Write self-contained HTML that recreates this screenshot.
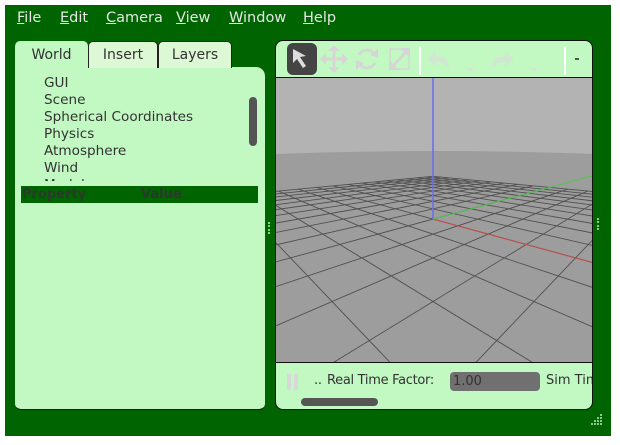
<!DOCTYPE html>
<html><head><meta charset="utf-8"><style>
*{margin:0;padding:0;box-sizing:border-box}
html,body{overflow:hidden}
body{width:620px;height:445px;background:#fff;position:relative;font-family:"DejaVu Sans",sans-serif;}
#win{position:absolute;left:5px;top:5px;width:606px;height:431px;background:#006400}
.m u{text-decoration:underline}
.a{position:absolute}
.tab{position:absolute;top:41px;height:27px;border:1px solid #222;border-bottom:none;border-radius:5px 5px 0 0;background:#dcf8d4;font-size:14px;color:#333;text-align:center;line-height:26px}
.tr{position:absolute;left:44px;font-size:13.6px;color:#333;white-space:nowrap}
.m{position:absolute;top:10px;color:#e6e6e6;font-size:14.5px;font-family:"DejaVu Sans",sans-serif}
</style></head><body>
<div id="win"></div>
<div class="m" style="left:17px"><u>F</u>ile</div>
<div class="m" style="left:60px"><u>E</u>dit</div>
<div class="m" style="left:106px"><u>C</u>amera</div>
<div class="m" style="left:176px"><u>V</u>iew</div>
<div class="m" style="left:229px"><u>W</u>indow</div>
<div class="m" style="left:303px"><u>H</u>elp</div>

<div class="a" style="left:15px;top:67px;width:250px;height:343px;background:#c2f8c2;border-radius:0 9px 6px 6px;border-bottom:1px solid #111"></div>
<div class="tab" style="left:15px;width:73px;background:#c2f8c2;height:28px;border-color:#c2f8c2;">World</div>
<div class="tab" style="left:88px;width:70px">Insert</div>
<div class="tab" style="left:158px;width:74px">Layers</div>
<div class="tr" style="top:75px">GUI</div>
<div class="tr" style="top:92px">Scene</div>
<div class="tr" style="top:109px">Spherical Coordinates</div>
<div class="tr" style="top:126px">Physics</div>
<div class="tr" style="top:143px">Atmosphere</div>
<div class="tr" style="top:160px">Wind</div>
<div class="a" style="left:44px;top:177px;width:60px;height:4px;overflow:hidden"><div class="tr" style="left:0;top:0">Models</div></div>
<div class="a" style="left:249px;top:97px;width:8px;height:49px;background:#555;border-radius:4px"></div>
<div class="a" style="left:21px;top:186px;width:237px;height:17px;background:#006400;color:#2a3a2a;font-weight:bold;font-size:13px;line-height:17px">
<span style="position:absolute;left:1px">Property</span><span style="position:absolute;left:120px">Value</span></div>
<div class="a" style="left:268px;top:222px;width:2px;height:12px;border-left:2px dotted #8c8"></div>
<div class="a" style="left:597px;top:218px;width:2px;height:12px;border-left:2px dotted #8c8"></div>

<div class="a" style="left:275px;top:40px;width:318px;height:370px;background:#c2f8c2;border-radius:8px;border:1px solid #111;overflow:hidden">
 <svg class="a" style="left:0;top:0" width="318" height="40">
  <rect x="11" y="2" width="30" height="32" rx="6" fill="#444"/>
  <path d="M17 8 L17 22 L21 18 L27 27 L30 25 L24 16 L30 15 Z" fill="#ddd"/>
  <g stroke="#d6d6d6" stroke-width="3" fill="#d6d6d6">
   <path d="M48 18 H68 M58 8 V28" fill="none"/>
   <path d="M44 18 L50 12 L50 24Z M72 18 L66 12 L66 24Z M58 4 L52 10 L64 10Z M58 32 L52 26 L64 26Z" stroke="none"/>
   <path d="M83 14 A9 9 0 0 1 99 14 M99 22 A9 9 0 0 1 83 22" fill="none"/>
   <path d="M102 7 L102 17 L94 14Z M80 29 L80 19 L88 22Z" stroke="none"/>
   <rect x="114" y="8" width="19" height="20" fill="none" stroke-width="1.5"/>
   <path d="M116 26 L131 10" fill="none"/>
   <path d="M134 7 L124 7 L134 17Z M113 29 L113 19 L123 29Z" stroke="none"/>
  </g>
  <rect x="143" y="6" width="2" height="28" fill="#fff"/>
  <path d="M151 18 L160 10 L160 15 Q173 15 173 27 Q168 21 160 21 L160 26Z" fill="#d0e8d0"/>
  <path d="M191 27 l4 4 l4 -4z" fill="#d0e8d0"/>
  <path d="M238 18 L229 10 L229 15 Q216 15 216 27 Q221 21 229 21 L229 26Z" fill="#d0e8d0"/>
  <path d="M254 27 l4 4 l4 -4z" fill="#d0e8d0"/>
  <rect x="288" y="6" width="2" height="28" fill="#fff"/>
  <rect x="299" y="17" width="4" height="2" fill="#555"/>
 </svg>
 <svg id="vp" class="a" style="left:0;top:36px;border-top:1px solid #111;border-bottom:1px solid #111" width="318" height="286"></svg>
 <div class="a" style="left:11px;top:333px;width:4px;height:16px;background:#d8d8d8"></div>
 <div class="a" style="left:18px;top:333px;width:4px;height:16px;background:#d8d8d8"></div>
 <div class="a" style="left:38px;top:332px;font-size:13px;letter-spacing:-0.3px;color:#333;white-space:nowrap">..</div>
 <div class="a" style="left:51px;top:332px;font-size:13px;letter-spacing:-0.3px;color:#333;white-space:nowrap">Real Time Factor:</div>
 <div class="a" style="left:174px;top:331px;width:90px;height:19px;background:#707070;border-radius:4px;font-size:13px;color:#333;padding-left:3px;line-height:19px">1.00</div>
 <div class="a" style="left:270px;top:332px;font-size:13px;color:#333;white-space:nowrap">Sim Time</div>
 <div class="a" style="left:25px;top:357px;width:77px;height:8px;background:#555;border-radius:4px"></div>
</div>
<svg class="a" style="left:590px;top:413px" width="14" height="14"><g fill="#8c8"><rect x="10" y="1" width="2" height="2"/><rect x="7" y="4" width="2" height="2"/><rect x="10" y="4" width="2" height="2"/><rect x="4" y="7" width="2" height="2"/><rect x="7" y="7" width="2" height="2"/><rect x="10" y="7" width="2" height="2"/><rect x="1" y="10" width="2" height="2"/><rect x="4" y="10" width="2" height="2"/><rect x="7" y="10" width="2" height="2"/><rect x="10" y="10" width="2" height="2"/></g></svg>
<script>
(function(){
var svg=document.getElementById('vp');var cx=157,cy=141,f=233;
var E=[5,-5,2],F=[-0.680,0.680,-0.272],R=[0.7071,0.7071,0],U=[-0.192,0.192,0.962];
function cam(p){var d=[p[0]-E[0],p[1]-E[1],p[2]-E[2]];return [d[0]*R[0]+d[1]*R[1]+d[2]*R[2],d[0]*U[0]+d[1]*U[1]+d[2]*U[2],d[0]*F[0]+d[1]*F[1]+d[2]*F[2]];}
function pr(c){return [cx+f*c[0]/c[2],cy-f*c[1]/c[2]];}
var s='<rect width="318" height="286" fill="#b3b3b3"/><path d="M0 76 Q159 70 318 76 V286 H0Z" fill="#9d9d9d"/>';
function line(a,b,col,w){var A=cam(a),B=cam(b),n=0.2;if(A[2]<n&&B[2]<n)return;
 if(A[2]<n){var t=(n-A[2])/(B[2]-A[2]);A=[A[0]+t*(B[0]-A[0]),A[1]+t*(B[1]-A[1]),n];}
 if(B[2]<n){var t=(n-B[2])/(A[2]-B[2]);B=[B[0]+t*(A[0]-B[0]),B[1]+t*(A[1]-B[1]),n];}
 var p=pr(A),q=pr(B);s+='<line x1="'+p[0].toFixed(1)+'" y1="'+p[1].toFixed(1)+'" x2="'+q[0].toFixed(1)+'" y2="'+q[1].toFixed(1)+'" stroke="'+col+'" stroke-width="'+w+'"/>';}
for(var i=-10;i<=10;i++){line([i,-10,0],[i,10,0],'#505050',0.9);line([-10,i,0],[10,i,0],'#505050',0.9);}
line([0,0,0],[30,0,0],'#c84a4a',1);line([0,0,0],[0,30,0],'#4ac84a',1);line([0,0,0],[0,0,30],'#6a6af0',1.5);
svg.innerHTML=s;})();
</script>
</body></html>
